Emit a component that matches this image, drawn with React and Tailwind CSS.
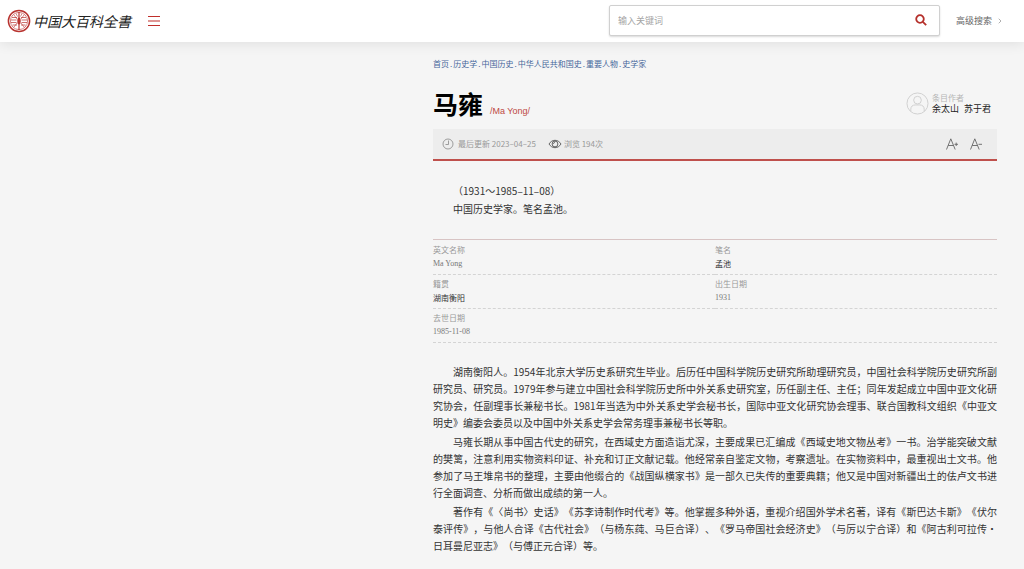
import { useState } from 'react';
import { ChevronRight } from 'lucide-react';

const crumbs = ['首页', '历史学', '中国历史', '中华人民共和国史', '重要人物', '史学家'];

const facts = [
    { label: '英文名称', value: 'Ma Yong', latin: true },
    { label: '笔名', value: '孟池' },
    { label: '籍贯', value: '湖南衡阳' },
    { label: '出生日期', value: '1931', latin: true },
    { label: '去世日期', value: '1985-11-08', latin: true },
];

const paragraphs = [
    '湖南衡阳人。1954年北京大学历史系研究生毕业。后历任中国科学院历史研究所助理研究员，中国社会科学院历史研究所副研究员、研究员。1979年参与建立中国社会科学院历史所中外关系史研究室，历任副主任、主任；同年发起成立中国中亚文化研究协会，任副理事长兼秘书长。1981年当选为中外关系史学会秘书长，国际中亚文化研究协会理事、联合国教科文组织《中亚文明史》编委会委员以及中国中外关系史学会常务理事兼秘书长等职。',
    '马雍长期从事中国古代史的研究，在西域史方面造诣尤深，主要成果已汇编成《西域史地文物丛考》一书。治学能突破文献的樊篱，注意利用实物资料印证、补充和订正文献记载。他经常亲自鉴定文物，考察遗址。在实物资料中，最重视出土文书。他参加了马王堆帛书的整理，主要由他缀合的《战国纵横家书》是一部久已失传的重要典籍；他又是中国对新疆出土的佉卢文书进行全面调查、分析而做出成绩的第一人。',
    '著作有《〈尚书〉史话》《苏李诗制作时代考》等。他掌握多种外语，重视介绍国外学术名著，译有《斯巴达卡斯》《伏尔泰评传》，与他人合译《古代社会》（与杨东莼、马巨合译）、《罗马帝国社会经济史》（与厉以宁合译）和《阿古利可拉传·日耳曼尼亚志》（与傅正元合译）等。',
];

function Seal() {
    return (
        <svg viewBox="0 0 24 24" className="h-6 w-6" fill="none" stroke="#b8332f">
            <circle cx="12" cy="12" r="10.6" strokeWidth="1.5" />
            <circle cx="12" cy="12" r="8.6" strokeWidth="0.6" />
            <path d="M12 3v18" strokeWidth="1.2" />
            <ellipse cx="12" cy="12" rx="1.7" ry="3.6" fill="#b8332f" stroke="none" />
            <path d="M5 8.500h5M14 8.500h5M4 11h5.500M14.500 11H20M4 13.500h5.500M14.500 13.500H20M5.500 16h4.500M14 16h4.500" strokeWidth="0.7" />
            <path d="M7 6l3 4M17 6l-3 4M7 18l3-4M17 18l-3-4M9 4.500l1.500 3M15 4.500l-1.500 3" strokeWidth="0.6" />
        </svg>
    );
}

function Header() {
    const [keyword, setKeyword] = useState('');

    return (
        <header className="flex h-[42px] items-center bg-white pl-[7px] pr-5 shadow-[0_2px_12px_rgba(0,0,0,0.09)]">
            <a href="#" className="flex items-center gap-0.5 text-[#222]">
                <Seal />
                <span className="font-['Noto_Sans_CJK_SC',sans-serif] text-sm italic">中国大百科全書</span>
            </a>
            <button type="button" aria-label="菜单" className="ml-[17px]">
                <svg viewBox="0 0 12 12" className="h-3 w-3" stroke="#c02f2b" strokeWidth="1.2">
                    <path d="M0 1.500h12M0 6h12M0 10.500h12" />
                </svg>
            </button>
            <form
                onSubmit={(e) => e.preventDefault()}
                className="mb-0.5 ml-auto flex h-[31px] w-[331px] items-center rounded-xs border border-[#d0d0d0] bg-white pl-2 pr-3 shadow-[0_1px_2px_rgba(0,0,0,0.15)]"
            >
                <input
                    type="text"
                    aria-label="输入关键词"
                    value={keyword}
                    onChange={(e) => setKeyword(e.target.value)}
                    placeholder="输入关键词"
                    className="h-full min-w-0 flex-1 text-[9px] outline-none placeholder:text-[#a5a5a5]"
                />
                <button type="submit" aria-label="搜索">
                    <svg viewBox="0 0 12 12" className="h-3 w-3" fill="none" stroke="#b5302b" strokeWidth="1.8">
                        <circle cx="5" cy="5" r="3.800" />
                        <path d="M7.800 7.800l3.400 3.400" />
                    </svg>
                </button>
            </form>
            <a href="#" className="ml-4 flex items-center gap-1 text-[9px] text-[#666]">
                高级搜索
                <ChevronRight size={8} className="text-[#888]" />
            </a>
        </header>
    );
}

function TitleRow() {
    return (
        <div className="mt-[10px] flex h-[46px] items-center justify-between">
            <div className="flex items-baseline gap-[7px]">
                <h1 className="text-[25px] leading-9 font-bold text-black">马雍</h1>
                <span className="font-['Liberation_Sans',sans-serif] text-[9px] text-[#bd4944]">/Ma Yong/</span>
            </div>
            <div className="mr-1.5 flex items-center gap-[3px]">
                <svg viewBox="0 0 24 24" className="h-[23px] w-[23px]" fill="none" stroke="#cfcfcf">
                    <circle cx="12" cy="12" r="11" />
                    <circle cx="12" cy="8.500" r="4" />
                    <path d="M5 20v-2c0-3 2-4.500 4.500-4.500h5c2.500 0 4.500 1.500 4.500 4.500v2" />
                </svg>
                <div>
                    <p className="text-[8px] leading-[11px] text-[#b5b5b5]">条目作者</p>
                    <p className="flex gap-[5px] text-[9px] leading-[11px] text-[#222]">
                        <a href="#">余太山</a>
                        <a href="#">苏于君</a>
                    </p>
                </div>
            </div>
        </div>
    );
}

function MetaBar() {
    return (
        <div className="mt-[3px] flex h-8 items-center border-b-2 border-[#bf504c] bg-[#ededed] pl-[9px] pr-[15px] text-[8px] text-[#999]">
            <svg viewBox="0 0 12 12" className="mr-1 h-3 w-3" fill="none" stroke="#888" strokeWidth="0.8">
                <circle cx="6" cy="6" r="5" />
                <path d="M6.500 2.500v4H3.500" />
            </svg>
            <span>最后更新 2023–04–25</span>
            <svg viewBox="0 0 14 10" className="ml-3 mr-0.5 h-[10px] w-[14px]" fill="none" stroke="#555" strokeWidth="0.9">
                <path d="M1 5c1.500-2.400 3.600-3.700 6-3.700S11.500 2.600 13 5c-1.500 2.400-3.600 3.700-6 3.700S2.500 7.400 1 5z" />
                <circle cx="7" cy="5" r="2.900" />
                <path d="M5.500 5c0-1 .5-1.500 1.500-1.500" />
            </svg>
            <span>浏览 194次</span>
            <div className="ml-auto flex gap-3">
                <button type="button" aria-label="放大字体">
                    <svg viewBox="0 0 12 12" className="h-3 w-3" fill="none" stroke="#666" strokeWidth="0.9">
                        <path d="M.500 11.500L4.800 .800 9.200 11.500M2.200 7.500h5.300M8.500 6.300h3.500M10.200 4.600v3.400" />
                    </svg>
                </button>
                <button type="button" aria-label="缩小字体">
                    <svg viewBox="0 0 12 12" className="h-3 w-3" fill="none" stroke="#666" strokeWidth="0.9">
                        <path d="M.500 11.500L4.800 .800 9.200 11.500M2.200 7.500h5.300M8.500 6.300h3.500" />
                    </svg>
                </button>
            </div>
        </div>
    );
}

export default function App() {
    return (
        <div className="min-h-screen bg-[#f5f5f5] font-['Noto_Sans_CJK_SC',sans-serif] [text-spacing-trim:space-all]" lang="zh-CN">
            <Header />
            <main className="mr-[27px] ml-[433px] pt-4 pb-3">
                <nav className="flex gap-px text-[8px] leading-3 text-[#47679b]">
                    {crumbs.map((crumb, i) => (
                        <span key={crumb} className="flex gap-px">
                            {i > 0 && <span>.</span>}
                            <a href="#">{crumb}</a>
                        </span>
                    ))}
                </nav>

                <TitleRow />
                <MetaBar />

                <section className="mt-[21px] indent-[2em] text-[10px] leading-[18px] text-[#333]">
                    <p>（1931～1985–11–08）</p>
                    <p>中国历史学家。笔名孟池。</p>
                </section>

                <dl className="mt-[21px] grid grid-cols-2 border-t border-[#d8c4c4] pt-px text-[8px] leading-[14px]">
                    {facts.map((fact) => (
                        <div key={fact.label} className="border-b border-dashed border-[#d4d4d4] pt-0.5 pb-[3px] last:col-span-2">
                            <dt className="text-[#999]">{fact.label}</dt>
                            <dd className={fact.latin ? "font-['Liberation_Serif',serif] text-[#777]" : 'text-[#333]'}>{fact.value}</dd>
                        </div>
                    ))}
                </dl>

                <article className="mt-5 flex flex-col gap-0.5 text-justify indent-[2em] text-[10px] leading-[17px] text-[#333]">
                    {paragraphs.map((text) => (
                        <p key={text}>{text}</p>
                    ))}
                </article>
            </main>
        </div>
    );
}
